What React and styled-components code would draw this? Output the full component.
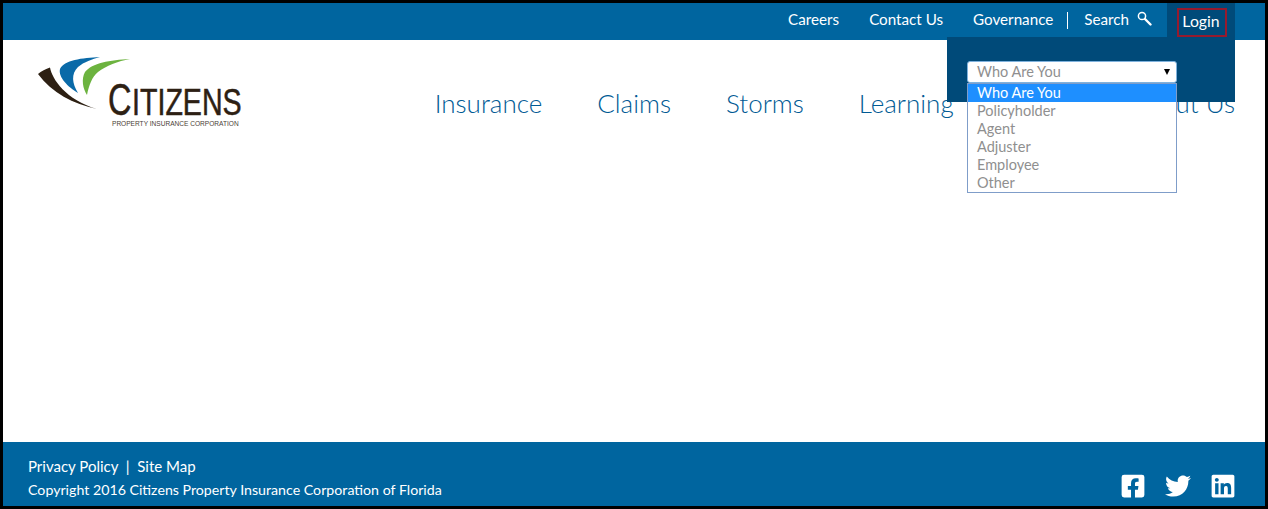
import React from 'react';
import styled, { createGlobalStyle } from 'styled-components';
import { FaFacebookSquare, FaTwitter, FaLinkedin } from 'react-icons/fa';

const GlobalStyle = createGlobalStyle`
  html, body {
    margin: 0;
    padding: 0;
    background: #fff;
  }
  * {
    box-sizing: border-box;
  }
`;

const Frame = styled.div`
  width: 1268px;
  height: 509px;
  border: 3px solid #000;
  display: flex;
  flex-direction: column;
  overflow: hidden;
  font-family: Lato, "Open Sans", sans-serif;
  color: #fff;
`;

const TopBar = styled.div`
  position: relative;
  z-index: 2;
  height: 37px;
  flex: none;
  background: #00659f;
  display: flex;
  justify-content: flex-end;
  align-items: flex-start;
  padding-right: 30px;
`;

const TopLink = styled.a`
  font-size: 15.2px;
  line-height: 33px;
  margin-right: ${(p) => p.$gap}px;
  white-space: nowrap;
`;

const Divider = styled.span`
  width: 1px;
  height: 17px;
  margin: 9px 16px 0 0;
  background: #fff;
`;

const SearchIcon = styled.svg`
  width: 15px;
  height: 15px;
  margin: 8px 15px 0 0;
`;

const LoginTab = styled.div`
  width: 68px;
  height: 34px;
  background: #004a79;
  padding: 5px 8px 0 10px;
`;

const LoginBox = styled.div`
  height: 29px;
  border: 2px solid #961a2e;
  padding-right: 2px;
  font-size: 15.8px;
  line-height: 22px;
  text-align: center;
`;

const LoginPanel = styled.div`
  position: absolute;
  top: 34px;
  right: 30px;
  width: 288px;
  height: 65px;
  background: #004a79;
  padding: 24px 0 0 20px;
`;

const SelectWrap = styled.div`
  position: relative;
  width: 210px;
  font-size: 14.5px;
  color: #8f8f8f;
`;

const SelectBox = styled.div`
  height: 22px;
  background: #fff;
  border: 1px solid #7fb2dd;
  border-radius: 3px;
  padding: 0 6px 0 9px;
  line-height: 20px;
  display: flex;
  justify-content: space-between;
  align-items: center;
`;

const Caret = styled.span`
  width: 0;
  height: 0;
  border-left: 3px solid transparent;
  border-right: 3px solid transparent;
  border-top: 6px solid #000;
`;

const OptionList = styled.div`
  position: absolute;
  top: 22px;
  left: 0;
  width: 210px;
  height: 110px;
  background: #fff;
  border: 1px solid #7f9dc9;
`;

const Option = styled.div`
  height: 18px;
  line-height: 17px;
  padding-left: 9px;
  background: ${(p) => (p.$active ? '#1e8fff' : 'transparent')};
  color: ${(p) => (p.$active ? '#fff' : '#8f8f8f')};
`;

const Header = styled.header`
  flex: 1;
  display: flex;
  justify-content: space-between;
  align-items: flex-start;
  padding: 17px 30px 0 35px;
`;

const Logo = styled.svg`
  width: 204px;
  height: 72px;
  flex: none;
`;

const Nav = styled.nav`
  display: flex;
  padding-top: 29px;
  overflow: hidden;
`;

const NavLink = styled.a`
  font-size: 26px;
  font-weight: 300;
  line-height: 34px;
  color: #005a94;
  margin-left: ${(p) => p.$gap}px;
  white-space: nowrap;
`;

const Footer = styled.footer`
  height: 64px;
  flex: none;
  background: #00659f;
  padding: 15px 29.5px 0 25px;
  display: flex;
  justify-content: space-between;
`;

const FooterText = styled.div`
  display: flex;
  flex-direction: column;
  gap: 6px;
`;

const FooterLinks = styled.div`
  font-size: 15px;
  line-height: 18px;
`;

const Copyright = styled.div`
  font-size: 14.2px;
  line-height: 18px;
`;

const Socials = styled.div`
  display: flex;
  gap: 19px;
  align-items: flex-start;
  padding-top: 16px;
  font-size: 26px;
  line-height: 0;
`;

const topLinks = [
  ['Careers', 30],
  ['Contact Us', 30],
  ['Governance', 14],
];

const options = ['Who Are You', 'Policyholder', 'Agent', 'Adjuster', 'Employee', 'Other'];

const navItems = [
  ['Insurance', 0],
  ['Claims', 55],
  ['Storms', 55],
  ['Learning', 55],
  ['About Us', 176],
];

export default function App() {
  return (
    <Frame>
      <GlobalStyle />
      <TopBar>
        {topLinks.map(([label, gap]) => (
          <TopLink key={label} $gap={gap}>{label}</TopLink>
        ))}
        <Divider />
        <TopLink $gap={8}>Search</TopLink>
        <SearchIcon viewBox="0 0 15 15" fill="none" stroke="#fff">
          <circle cx="5" cy="5" r="3.6" strokeWidth="1.5" />
          <path d="M8 8l5.5 5.5" strokeWidth="2.4" strokeLinecap="round" />
        </SearchIcon>
        <LoginTab>
          <LoginBox>Login</LoginBox>
        </LoginTab>
        <LoginPanel>
          <SelectWrap>
            <SelectBox>
              Who Are You
              <Caret />
            </SelectBox>
            <OptionList>
              {options.map((o, i) => (
                <Option key={o} $active={i === 0}>{o}</Option>
              ))}
            </OptionList>
          </SelectWrap>
        </LoginPanel>
      </TopBar>
      <Header>
        <Logo viewBox="0 0 204 72">
          <path d="M0 17C3 14 8 12 12 10.5C14 22 28 43 59 52C35 47 14 36 0 17Z" fill="#2d2013" />
          <path d="M62 0C44 1 26 3 22 12C20 20 30 30 40 36C34 26 33 17 40 10C46 5 54 2 62 0Z" fill="#0a6aa8" />
          <path d="M92 2C72 3 54 6 47 15C43 22 45 32 49 38C51 28 54 20 60 15C68 9 80 4 92 2Z" fill="#6cb33f" />
          <g fontFamily="'Liberation Sans', sans-serif" fill="#2d2013" stroke="#2d2013" strokeWidth="0.5">
            <text transform="translate(70 58) scale(0.74 1)" fontSize="44">C</text>
            <text transform="translate(94 58) scale(0.795 1)" fontSize="36">ITIZENS</text>
          </g>
          <text transform="translate(74 69) scale(0.85 1)" fontFamily="'Liberation Sans', sans-serif" fontSize="7.6" fill="#4a4035" textLength="149" lengthAdjust="spacingAndGlyphs">PROPERTY INSURANCE CORPORATION</text>
        </Logo>
        <Nav>
          {navItems.map(([label, gap]) => (
            <NavLink key={label} $gap={gap}>{label}</NavLink>
          ))}
        </Nav>
      </Header>
      <Footer>
        <FooterText>
          <FooterLinks>Privacy Policy &nbsp;|&nbsp; Site Map</FooterLinks>
          <Copyright>Copyright 2016 Citizens Property Insurance Corporation of Florida</Copyright>
        </FooterText>
        <Socials>
          <FaFacebookSquare />
          <FaTwitter />
          <FaLinkedin />
        </Socials>
      </Footer>
    </Frame>
  );
}
